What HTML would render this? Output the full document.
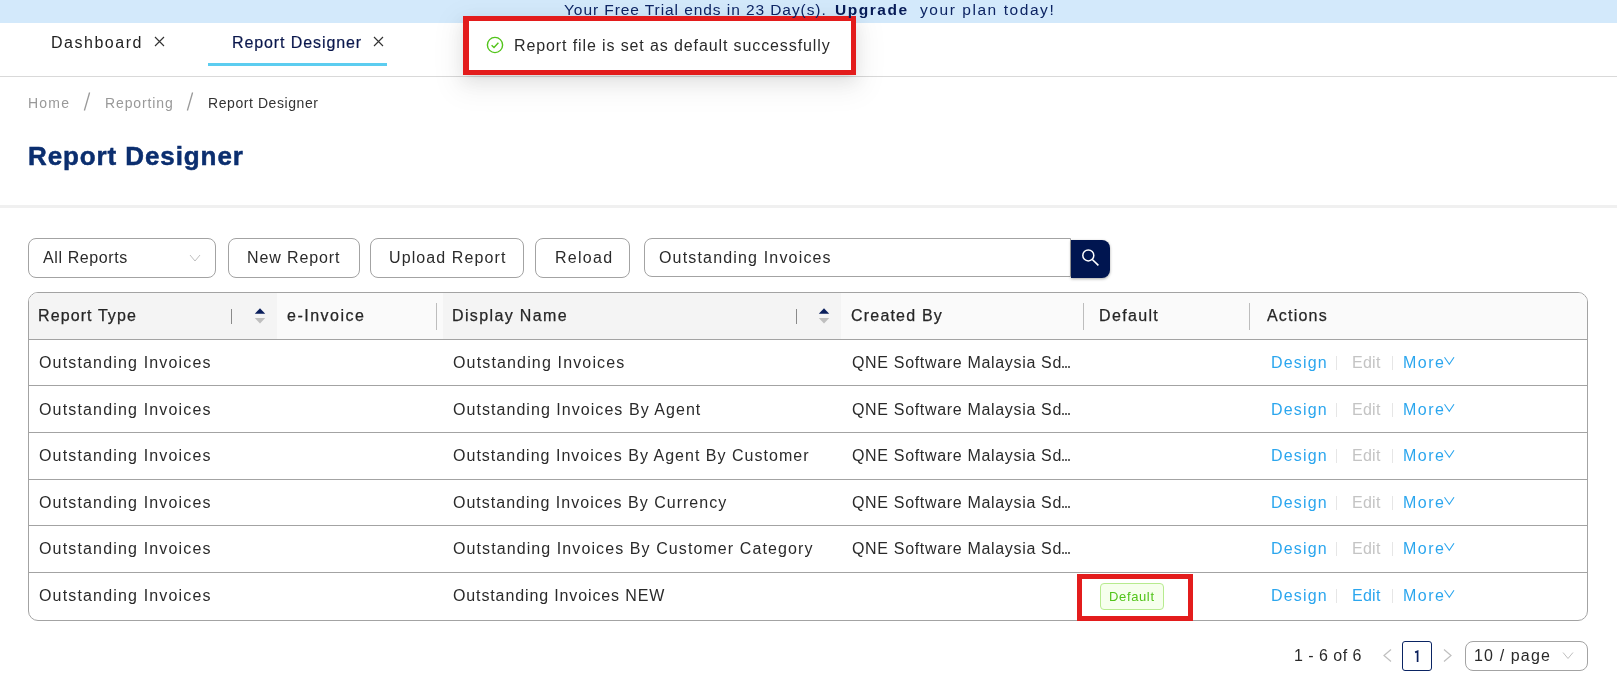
<!DOCTYPE html>
<html><head><meta charset="utf-8">
<style>
*{box-sizing:border-box;margin:0;padding:0}
html,body{width:1617px;height:692px;overflow:hidden;background:#fff;font-family:"Liberation Sans",sans-serif;color:#333}
.a{position:absolute}
.t{position:absolute;white-space:nowrap;line-height:1;font-size:16px;will-change:transform}
.btn{position:absolute;top:238px;height:40px;border:1px solid #a3a3a3;border-radius:8px;background:#fff}
.hline{position:absolute;left:29px;width:1558px;height:1px;background:#a3a3a3}
.sep{position:absolute;top:303px;width:1px;height:27px;background:#bdbdbd}
.asep{position:absolute;width:1px;height:14px;background:#e6e6e6}
</style></head><body>
<div class="a" style="left:0;top:0;width:1617px;height:23px;background:#d3e9fb"></div>

<!-- tabs -->
<svg class="a" style="left:154px;top:36px" width="11" height="11" viewBox="0 0 11 11"><path d="M1 1L10 10M10 1L1 10" stroke="#333" stroke-width="1.15"/></svg>
<svg class="a" style="left:373px;top:36px" width="11" height="11" viewBox="0 0 11 11"><path d="M1 1L10 10M10 1L1 10" stroke="#333" stroke-width="1.15"/></svg>
<div class="a" style="left:208px;top:63px;width:179px;height:3px;background:#5ccdf0"></div>
<div class="a" style="left:0;top:76px;width:1617px;height:1px;background:#d9d9d9"></div>

<!-- toast box -->
<div class="a" style="left:463px;top:16px;width:393px;height:59px;border:5px solid #e31c1c;border-left-width:6px;background:#fff;box-shadow:0 6px 16px 0 rgba(0,0,0,.08),0 3px 6px -4px rgba(0,0,0,.12),0 9px 28px 8px rgba(0,0,0,.05)"></div>
<svg class="a" style="left:486px;top:36px" width="18" height="18" viewBox="0 0 18 18"><circle cx="9" cy="9" r="7.6" fill="none" stroke="#52c41a" stroke-width="1.4"/><path d="M5.6 9.2L8 11.4L12.4 6.8" fill="none" stroke="#52c41a" stroke-width="1.4"/></svg>

<!-- breadcrumb slashes -->
<svg class="a" style="left:82px;top:91px" width="10" height="21" viewBox="0 0 10 21"><path d="M7.6 1.5L2.4 19.5" stroke="#999" stroke-width="1.3"/></svg>
<svg class="a" style="left:185px;top:91px" width="10" height="21" viewBox="0 0 10 21"><path d="M7.6 1.5L2.4 19.5" stroke="#999" stroke-width="1.3"/></svg>

<div class="a" style="left:0;top:205px;width:1617px;height:3px;background:#f0f0f0"></div>

<!-- toolbar -->
<div class="btn" style="left:28px;width:188px"></div>
<svg class="a" style="left:189px;top:253px" width="12" height="10" viewBox="0 0 12 10"><path d="M1 2L6 8L11 2" fill="none" stroke="#bfbfbf" stroke-width="1"/></svg>
<div class="btn" style="left:228px;width:132px"></div>
<div class="btn" style="left:370px;width:154px"></div>
<div class="btn" style="left:535px;width:95px"></div>
<div class="a" style="left:644px;top:238px;width:427px;height:39px;border:1px solid #a3a3a3;border-radius:8px 0 0 8px;background:#fff"></div>
<div class="a" style="left:1071px;top:240px;width:39px;height:38px;background:#001550;border-radius:0 8px 8px 0;box-shadow:0 1px 3px rgba(0,0,0,0.35)"></div>
<svg class="a" style="left:1078px;top:245px" width="24" height="24" viewBox="0 0 24 24"><circle cx="10.3" cy="10.4" r="5.5" fill="none" stroke="#fff" stroke-width="1.5"/><path d="M14.3 14.5L20.4 20.4" stroke="#fff" stroke-width="1.6"/></svg>

<!-- table -->
<div class="a" style="left:28px;top:292px;width:1560px;height:329px;border:1px solid #a3a3a3;border-radius:10px;overflow:hidden">
  <div class="a" style="left:0;top:0;width:1558px;height:46px;background:#fafafa"></div>
  <div class="a" style="left:0;top:0;width:248px;height:46px;background:#f4f4f4"></div>
  <div class="a" style="left:414px;top:0;width:398px;height:46px;background:#f4f4f4"></div>
</div>
<div class="hline" style="top:339px"></div>
<div class="hline" style="top:385px"></div>
<div class="hline" style="top:432px"></div>
<div class="hline" style="top:479px"></div>
<div class="hline" style="top:525px"></div>
<div class="hline" style="top:572px"></div>

<div class="a" style="left:231px;top:309px;width:1px;height:15px;background:#8a8a8a"></div>
<svg class="a" style="left:254px;top:307px" width="12" height="17" viewBox="0 0 12 17"><path d="M0.8 6.8L6 1.2L11.2 6.8Z" fill="#0a1f5c"/><path d="M0.8 11L6 16.6L11.2 11Z" fill="#bfbfbf"/></svg>
<div class="sep" style="left:436px"></div>
<div class="a" style="left:796px;top:309px;width:1px;height:15px;background:#8a8a8a"></div>
<svg class="a" style="left:818px;top:307px" width="12" height="17" viewBox="0 0 12 17"><path d="M0.8 6.8L6 1.2L11.2 6.8Z" fill="#0a1f5c"/><path d="M0.8 11L6 16.6L11.2 11Z" fill="#bfbfbf"/></svg>
<div class="sep" style="left:1083px"></div>
<div class="sep" style="left:1249px"></div>

<!-- row action separators/chevrons -->
<div class="asep" style="left:1336px;top:356px"></div>
<div class="asep" style="left:1392px;top:356px"></div>
<svg class="a" style="left:1443px;top:356px" width="13" height="10" viewBox="0 0 13 10"><path d="M1.5 1.3L6.3 8.3L11 1.3" fill="none" stroke="#2ba6ee" stroke-width="1.1"/></svg>
<div class="a" style="left:1062.4px;top:365.6px;width:2px;height:2px;border-radius:1px;background:#333"></div>
<div class="a" style="left:1065.3px;top:365.6px;width:2px;height:2px;border-radius:1px;background:#333"></div>
<div class="a" style="left:1068.2px;top:365.6px;width:2px;height:2px;border-radius:1px;background:#333"></div>
<div class="asep" style="left:1336px;top:403px"></div>
<div class="asep" style="left:1392px;top:403px"></div>
<svg class="a" style="left:1443px;top:403px" width="13" height="10" viewBox="0 0 13 10"><path d="M1.5 1.3L6.3 8.3L11 1.3" fill="none" stroke="#2ba6ee" stroke-width="1.1"/></svg>
<div class="a" style="left:1062.4px;top:412.6px;width:2px;height:2px;border-radius:1px;background:#333"></div>
<div class="a" style="left:1065.3px;top:412.6px;width:2px;height:2px;border-radius:1px;background:#333"></div>
<div class="a" style="left:1068.2px;top:412.6px;width:2px;height:2px;border-radius:1px;background:#333"></div>
<div class="asep" style="left:1336px;top:449px"></div>
<div class="asep" style="left:1392px;top:449px"></div>
<svg class="a" style="left:1443px;top:449px" width="13" height="10" viewBox="0 0 13 10"><path d="M1.5 1.3L6.3 8.3L11 1.3" fill="none" stroke="#2ba6ee" stroke-width="1.1"/></svg>
<div class="a" style="left:1062.4px;top:458.6px;width:2px;height:2px;border-radius:1px;background:#333"></div>
<div class="a" style="left:1065.3px;top:458.6px;width:2px;height:2px;border-radius:1px;background:#333"></div>
<div class="a" style="left:1068.2px;top:458.6px;width:2px;height:2px;border-radius:1px;background:#333"></div>
<div class="asep" style="left:1336px;top:496px"></div>
<div class="asep" style="left:1392px;top:496px"></div>
<svg class="a" style="left:1443px;top:496px" width="13" height="10" viewBox="0 0 13 10"><path d="M1.5 1.3L6.3 8.3L11 1.3" fill="none" stroke="#2ba6ee" stroke-width="1.1"/></svg>
<div class="a" style="left:1062.4px;top:505.6px;width:2px;height:2px;border-radius:1px;background:#333"></div>
<div class="a" style="left:1065.3px;top:505.6px;width:2px;height:2px;border-radius:1px;background:#333"></div>
<div class="a" style="left:1068.2px;top:505.6px;width:2px;height:2px;border-radius:1px;background:#333"></div>
<div class="asep" style="left:1336px;top:542px"></div>
<div class="asep" style="left:1392px;top:542px"></div>
<svg class="a" style="left:1443px;top:542px" width="13" height="10" viewBox="0 0 13 10"><path d="M1.5 1.3L6.3 8.3L11 1.3" fill="none" stroke="#2ba6ee" stroke-width="1.1"/></svg>
<div class="a" style="left:1062.4px;top:551.6px;width:2px;height:2px;border-radius:1px;background:#333"></div>
<div class="a" style="left:1065.3px;top:551.6px;width:2px;height:2px;border-radius:1px;background:#333"></div>
<div class="a" style="left:1068.2px;top:551.6px;width:2px;height:2px;border-radius:1px;background:#333"></div>
<div class="asep" style="left:1336px;top:589px"></div>
<div class="asep" style="left:1392px;top:589px"></div>
<svg class="a" style="left:1443px;top:589px" width="13" height="10" viewBox="0 0 13 10"><path d="M1.5 1.3L6.3 8.3L11 1.3" fill="none" stroke="#2ba6ee" stroke-width="1.1"/></svg>
<!-- badge -->
<div class="a" style="left:1100px;top:583px;width:64px;height:27px;border:1px solid #b7eb8f;background:#f6ffed;border-radius:4px"></div>
<div class="a" style="left:1077px;top:574px;width:116px;height:47px;border:5px solid #e31c1c"></div>

<!-- pagination -->
<svg class="a" style="left:1381px;top:648px" width="12" height="15" viewBox="0 0 12 15"><path d="M10 1.5L3 7.5L10 13.5" fill="none" stroke="#bfbfbf" stroke-width="1.2"/></svg>
<div class="a" style="left:1402px;top:641px;width:30px;height:30px;border:1px solid #0a2463;border-radius:3px"></div>
<svg class="a" style="left:1410px;top:648px" width="14" height="15" viewBox="0 0 14 15"><path d="M5.1 4.4L7.6 3.3V14" fill="none" stroke="#0a1f5c" stroke-width="1.7"/></svg>
<svg class="a" style="left:1442px;top:648px" width="12" height="15" viewBox="0 0 12 15"><path d="M2 1.5L9 7.5L2 13.5" fill="none" stroke="#bfbfbf" stroke-width="1.2"/></svg>
<div class="a" style="left:1465px;top:641px;width:123px;height:30px;border:1px solid #a3a3a3;border-radius:8px"></div>
<svg class="a" style="left:1562px;top:651px" width="12" height="9" viewBox="0 0 12 9"><path d="M1 1.5L6 7.5L11 1.5" fill="none" stroke="#bfbfbf" stroke-width="1"/></svg>

<div class="t" style="left:564.00px;top:2.00px;font-size:15.5px;color:#0d2463;letter-spacing:0.927px;">Your Free Trial ends in 23 Day(s).</div>
<div class="t" style="left:834.80px;top:2.00px;font-size:15.5px;font-weight:700;color:#061a56;letter-spacing:1.533px;">Upgrade</div>
<div class="t" style="left:919.60px;top:2.00px;font-size:15.5px;color:#0d2463;letter-spacing:1.560px;">your plan today!</div>
<div class="t" style="left:51.40px;top:35.00px;font-size:16px;color:#222;letter-spacing:1.512px;">Dashboard</div>
<div class="t" style="left:231.80px;top:35.00px;font-size:16px;color:#0a174c;letter-spacing:0.900px;-webkit-text-stroke:0.2px #0a174c;">Report Designer</div>
<div class="t" style="left:513.60px;top:38.00px;font-size:16px;color:#2a2a2a;letter-spacing:0.888px;">Report file is set as default successfully</div>
<div class="t" style="left:27.70px;top:96.00px;font-size:14px;color:#999;letter-spacing:1.200px;">Home</div>
<div class="t" style="left:104.50px;top:96.00px;font-size:14px;color:#999;letter-spacing:0.875px;">Reporting</div>
<div class="t" style="left:208.00px;top:96.00px;font-size:14px;color:#333;letter-spacing:0.571px;">Report Designer</div>
<div class="t" style="left:28.20px;top:143.00px;font-size:26px;font-weight:700;color:#0b2e6f;letter-spacing:0.900px;-webkit-text-stroke:0.5px #0b2e6f;">Report Designer</div>
<div class="t" style="left:43.40px;top:250.00px;font-size:16px;color:#2a2a2a;letter-spacing:0.610px;">All Reports</div>
<div class="t" style="left:247.00px;top:250.00px;font-size:16px;color:#2a2a2a;letter-spacing:0.889px;">New Report</div>
<div class="t" style="left:389.00px;top:250.00px;font-size:16px;color:#2a2a2a;letter-spacing:1.100px;">Upload Report</div>
<div class="t" style="left:554.60px;top:250.00px;font-size:16px;color:#2a2a2a;letter-spacing:1.280px;">Reload</div>
<div class="t" style="left:658.80px;top:250.00px;font-size:16px;color:#2a2a2a;letter-spacing:1.168px;">Outstanding Invoices</div>
<div class="t" style="left:38.40px;top:308.00px;font-size:16px;color:#262626;letter-spacing:1.100px;-webkit-text-stroke:0.25px #262626;">Report Type</div>
<div class="t" style="left:287.30px;top:308.00px;font-size:16px;color:#262626;letter-spacing:1.500px;-webkit-text-stroke:0.25px #262626;">e-Invoice</div>
<div class="t" style="left:452.30px;top:308.00px;font-size:16px;color:#262626;letter-spacing:1.364px;-webkit-text-stroke:0.25px #262626;">Display Name</div>
<div class="t" style="left:850.80px;top:308.00px;font-size:16px;color:#262626;letter-spacing:1.200px;-webkit-text-stroke:0.25px #262626;">Created By</div>
<div class="t" style="left:1099.40px;top:308.00px;font-size:16px;color:#262626;letter-spacing:1.350px;-webkit-text-stroke:0.25px #262626;">Default</div>
<div class="t" style="left:1267.00px;top:308.00px;font-size:16px;color:#262626;letter-spacing:1.200px;-webkit-text-stroke:0.25px #262626;">Actions</div>
<div class="t" style="left:39.40px;top:355.00px;font-size:16px;color:#2a2a2a;letter-spacing:1.163px;">Outstanding Invoices</div>
<div class="t" style="left:453.30px;top:355.00px;font-size:16px;color:#2a2a2a;letter-spacing:1.153px;">Outstanding Invoices</div>
<div class="t" style="left:852.00px;top:355.00px;font-size:16px;color:#2a2a2a;letter-spacing:0.674px;">QNE Software Malaysia Sd</div>
<div class="t" style="left:1270.70px;top:355.00px;font-size:16px;color:#2ba6ee;letter-spacing:1.180px;">Design</div>
<div class="t" style="left:1352.20px;top:355.00px;font-size:16px;color:#c4c4c4;letter-spacing:0.267px;">Edit</div>
<div class="t" style="left:1402.50px;top:355.00px;font-size:16px;color:#2ba6ee;letter-spacing:1.500px;">More</div>
<div class="t" style="left:39.40px;top:402.00px;font-size:16px;color:#2a2a2a;letter-spacing:1.163px;">Outstanding Invoices</div>
<div class="t" style="left:453.30px;top:402.00px;font-size:16px;color:#2a2a2a;letter-spacing:1.050px;">Outstanding Invoices By Agent</div>
<div class="t" style="left:852.00px;top:402.00px;font-size:16px;color:#2a2a2a;letter-spacing:0.674px;">QNE Software Malaysia Sd</div>
<div class="t" style="left:1270.70px;top:402.00px;font-size:16px;color:#2ba6ee;letter-spacing:1.180px;">Design</div>
<div class="t" style="left:1352.20px;top:402.00px;font-size:16px;color:#c4c4c4;letter-spacing:0.267px;">Edit</div>
<div class="t" style="left:1402.50px;top:402.00px;font-size:16px;color:#2ba6ee;letter-spacing:1.500px;">More</div>
<div class="t" style="left:39.40px;top:448.00px;font-size:16px;color:#2a2a2a;letter-spacing:1.163px;">Outstanding Invoices</div>
<div class="t" style="left:453.30px;top:448.00px;font-size:16px;color:#2a2a2a;letter-spacing:1.017px;">Outstanding Invoices By Agent By Customer</div>
<div class="t" style="left:852.00px;top:448.00px;font-size:16px;color:#2a2a2a;letter-spacing:0.674px;">QNE Software Malaysia Sd</div>
<div class="t" style="left:1270.70px;top:448.00px;font-size:16px;color:#2ba6ee;letter-spacing:1.180px;">Design</div>
<div class="t" style="left:1352.20px;top:448.00px;font-size:16px;color:#c4c4c4;letter-spacing:0.267px;">Edit</div>
<div class="t" style="left:1402.50px;top:448.00px;font-size:16px;color:#2ba6ee;letter-spacing:1.500px;">More</div>
<div class="t" style="left:39.40px;top:495.00px;font-size:16px;color:#2a2a2a;letter-spacing:1.163px;">Outstanding Invoices</div>
<div class="t" style="left:453.30px;top:495.00px;font-size:16px;color:#2a2a2a;letter-spacing:1.010px;">Outstanding Invoices By Currency</div>
<div class="t" style="left:852.00px;top:495.00px;font-size:16px;color:#2a2a2a;letter-spacing:0.674px;">QNE Software Malaysia Sd</div>
<div class="t" style="left:1270.70px;top:495.00px;font-size:16px;color:#2ba6ee;letter-spacing:1.180px;">Design</div>
<div class="t" style="left:1352.20px;top:495.00px;font-size:16px;color:#c4c4c4;letter-spacing:0.267px;">Edit</div>
<div class="t" style="left:1402.50px;top:495.00px;font-size:16px;color:#2ba6ee;letter-spacing:1.500px;">More</div>
<div class="t" style="left:39.40px;top:541.00px;font-size:16px;color:#2a2a2a;letter-spacing:1.163px;">Outstanding Invoices</div>
<div class="t" style="left:453.30px;top:541.00px;font-size:16px;color:#2a2a2a;letter-spacing:1.092px;">Outstanding Invoices By Customer Category</div>
<div class="t" style="left:852.00px;top:541.00px;font-size:16px;color:#2a2a2a;letter-spacing:0.674px;">QNE Software Malaysia Sd</div>
<div class="t" style="left:1270.70px;top:541.00px;font-size:16px;color:#2ba6ee;letter-spacing:1.180px;">Design</div>
<div class="t" style="left:1352.20px;top:541.00px;font-size:16px;color:#c4c4c4;letter-spacing:0.267px;">Edit</div>
<div class="t" style="left:1402.50px;top:541.00px;font-size:16px;color:#2ba6ee;letter-spacing:1.500px;">More</div>
<div class="t" style="left:39.40px;top:588.00px;font-size:16px;color:#2a2a2a;letter-spacing:1.163px;">Outstanding Invoices</div>
<div class="t" style="left:453.30px;top:588.00px;font-size:16px;color:#2a2a2a;letter-spacing:0.878px;">Outstanding Invoices NEW</div>
<div class="t" style="left:1270.70px;top:588.00px;font-size:16px;color:#2ba6ee;letter-spacing:1.180px;">Design</div>
<div class="t" style="left:1352.20px;top:588.00px;font-size:16px;color:#2ba6ee;letter-spacing:0.267px;">Edit</div>
<div class="t" style="left:1402.50px;top:588.00px;font-size:16px;color:#2ba6ee;letter-spacing:1.500px;">More</div>
<div class="t" style="left:1109.40px;top:590.00px;font-size:13px;color:#52c41a;letter-spacing:0.633px;">Default</div>
<div class="t" style="left:1293.80px;top:648.00px;font-size:16px;color:#2a2a2a;letter-spacing:0.478px;">1 - 6 of 6</div>
<div class="t" style="left:1474.00px;top:648.00px;font-size:16px;color:#2a2a2a;letter-spacing:1.137px;">10 / page</div>
</body></html>
